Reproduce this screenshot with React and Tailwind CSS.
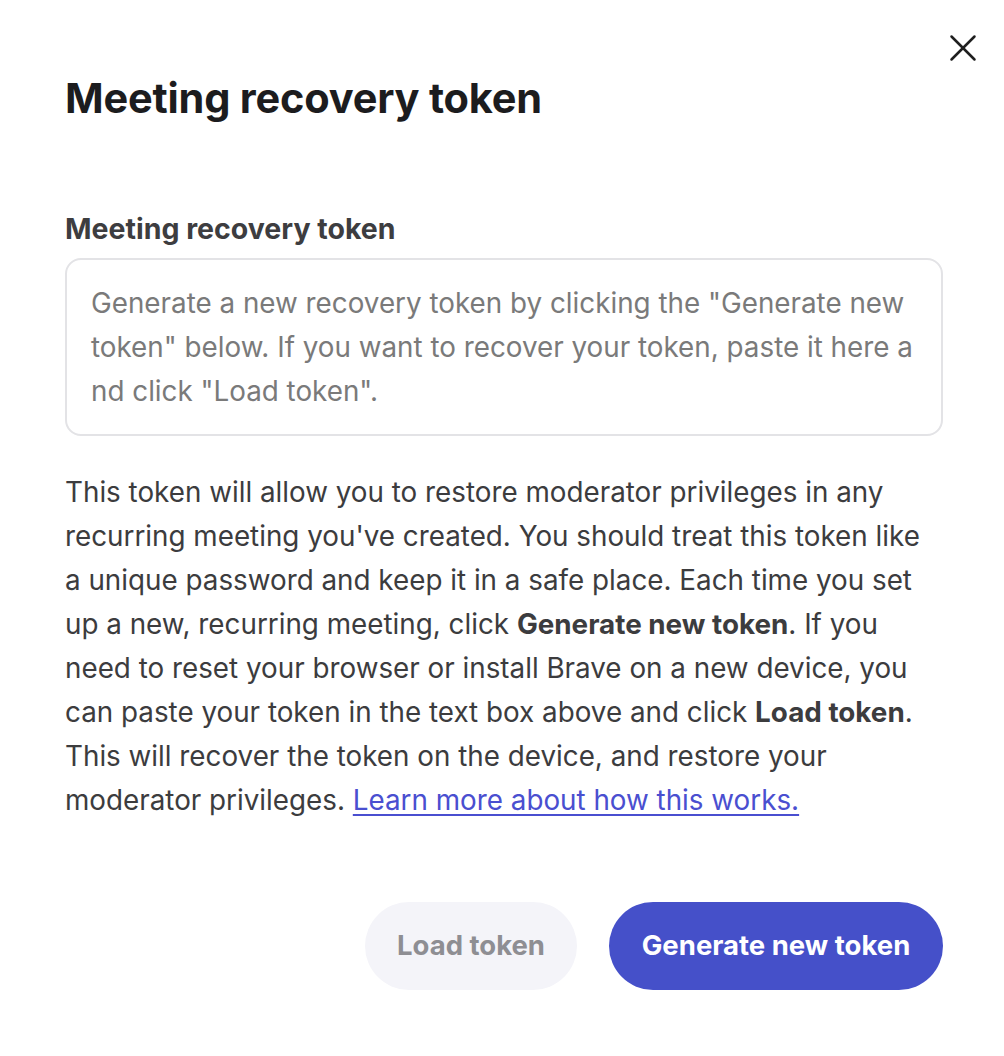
import { X } from "lucide-react"

export default function App() {
  return (
    <div className="min-h-[1056px] w-[1004px] bg-white font-['Inter',sans-serif]">
      <div className="relative pl-[65px] pr-[61px] pt-[72px] pb-[66px]">
        <button className="absolute right-[18px] top-[25px] text-[#1f1f1f]">
          <X size={46} strokeWidth={1.3} />
        </button>

        <h1 className="text-[41.5px] font-bold leading-[52px] tracking-[-0.2px] text-[#1c1c1e]">
          Meeting recovery token
        </h1>

        <label className="mt-[87px] block text-[28.5px] font-bold leading-[36px] text-[#3d3d40]">
          Meeting recovery token
        </label>

        <div className="mt-[11px] h-[178px] rounded-[16px] border-2 border-[#e3e3e6] px-[24px] pt-[21px] text-[27.8px] leading-[44px] text-[#7a7a7a]">
          Generate a new recovery token by clicking the "Generate new
          <br />
          token" below. If you want to recover your token, paste it here a
          <br />
          nd click "Load token".
        </div>

        <p className="mt-[34px] text-[27.8px] leading-[44px] text-[#3c3c3e]">
          This token will allow you to restore moderator privileges in any
          <br />
          recurring meeting you've created. You should treat this token like
          <br />
          a unique password and keep it in a safe place. Each time you set
          <br />
          up a new, recurring meeting, click{" "}
          <span className="font-bold">Generate new token</span>. If you
          <br />
          need to reset your browser or install Brave on a new device, you
          <br />
          can paste your token in the text box above and click{" "}
          <span className="font-bold">Load token</span>.
          <br />
          This will recover the token on the device, and restore your
          <br />
          moderator privileges.{" "}
          <a href="#" className="text-[#4a4fd0] underline underline-offset-[4px]">
            Learn more about how this works.
          </a>
        </p>

        <div className="mt-[80px] flex justify-end gap-[32px]">
          <button className="h-[88px] w-[212px] rounded-full bg-[#f4f4f9] text-[27.5px] font-bold text-[#8e8e93]">
            Load token
          </button>
          <button className="h-[88px] w-[334px] rounded-full bg-[#4550c9] text-[27.5px] font-bold text-white">
            Generate new token
          </button>
        </div>
      </div>
    </div>
  )
}
